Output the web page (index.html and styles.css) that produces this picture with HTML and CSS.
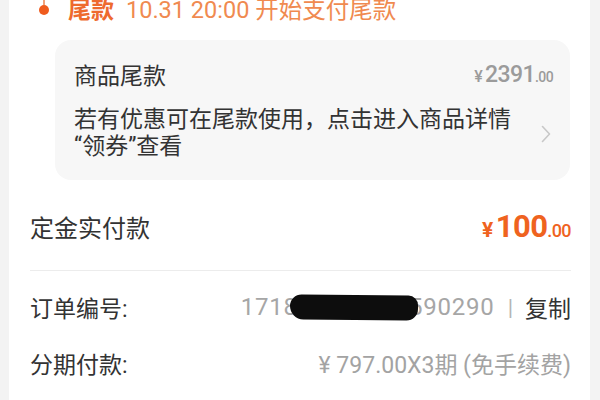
FILE: index.html
```html
<!DOCTYPE html>
<html lang="zh">
<head>
<meta charset="utf-8">
<link rel="stylesheet" href="styles.css">
</head>
<body>
<div class="card">
  <div class="stage">
    <div class="marker"><span class="stem"></span><span class="dot"></span></div>
    <span class="stage-name">尾款</span>
    <span class="stage-time">10.31 20:00 开始支付尾款</span>
  </div>
  <div class="balance">
    <div class="balance-row">
      <span class="label">商品尾款</span>
      <span class="price-gray"><span class="yen">¥</span>2391<span class="dec">.00</span></span>
    </div>
    <div class="coupon">
      <p class="coupon-text">若有优惠可在尾款使用，点击进入商品详情<br>“领券”查看</p>
      <svg class="chev" width="10" height="18" viewBox="0 0 10 18"><path d="M1.5 1.5 L8.5 9 L1.5 16.5" fill="none" stroke="#c8c8c8" stroke-width="1.6" stroke-linecap="round" stroke-linejoin="round"/></svg>
    </div>
  </div>
  <div class="paid">
    <span class="paid-label">定金实付款</span>
    <span class="price-orange"><span class="yen">¥</span>100<span class="dec">.00</span></span>
  </div>
  <div class="divider"></div>
  <div class="info">
    <span class="info-label">订单编号:</span>
    <span class="info-value"><span class="num order">1718<span class="redact"></span>590290</span><span class="sep">|</span><span class="copy">复制</span></span>
  </div>
  <div class="info">
    <span class="info-label">分期付款:</span>
    <span class="info-value"><span class="num">¥ 797.00X3期 (免手续费)</span></span>
  </div>
</div>
</body>
</html>
```
FILE: styles.css
```css
html, body {
  margin: 0;
  padding: 0;
}
body {
  width: 600px;
  height: 400px;
  overflow: hidden;
  background: #f3f3f3;
  font-family: Roboto, "Noto Sans CJK SC", sans-serif;
  color: #333;
}
.card {
  margin-left: 9px;
  width: 581px;
  height: 400px;
  background: #fff;
  overflow: hidden;
}
.stage {
  display: flex;
  align-items: center;
  height: 24px;
  margin-top: -4px;
  padding-left: 30px;
}
.marker {
  display: flex;
  flex-direction: column;
  align-items: center;
  width: 10px;
  margin-right: 19px;
}
.stem {
  width: 1.5px;
  height: 8px;
  background: #f2a27a;
}
.dot {
  width: 10px;
  height: 10px;
  border-radius: 50%;
  background: #ef5b1d;
  margin-bottom: 4px;
}
.stage-name {
  font-size: 23px;
  font-weight: 700;
  color: #ee6a2e;
  margin-right: 12px;
}
.stage-time {
  font-size: 23.5px;
  color: #f08a50;
}
.balance {
  margin: 20px 0 0 46px;
  width: 515px;
  height: 140px;
  box-sizing: border-box;
  background: #f7f7f7;
  border-radius: 16px;
  padding: 0 17px 0 19px;
}
.balance-row {
  display: flex;
  justify-content: space-between;
  align-items: center;
  height: 32px;
  padding-top: 18px;
}
.label {
  font-size: 23px;
  color: #333;
}
.price-gray {
  font-size: 23px;
  font-weight: 500;
  color: #9b9b9b;
  letter-spacing: -0.6px;
}
.price-gray .yen {
  font-size: 16px;
  margin-right: 3px;
}
.price-gray .dec {
  font-size: 14px;
}
.coupon {
  display: flex;
  align-items: center;
  justify-content: space-between;
  margin-top: 16px;
}
.coupon-text {
  margin: 0;
  font-size: 23px;
  line-height: 27px;
  color: #333;
}
.chev {
  margin-right: 2px;
  margin-top: 2px;
}
.paid {
  display: flex;
  justify-content: space-between;
  align-items: center;
  height: 40px;
  margin-top: 26px;
  padding: 0 19px 0 21px;
}
.paid-label {
  font-size: 24px;
  color: #333;
}
.price-orange {
  color: #ef631f;
  font-weight: 700;
  font-size: 31px;
  letter-spacing: -0.6px;
}
.price-orange .yen {
  font-size: 21px;
  margin-right: 3px;
}
.price-orange .dec {
  font-size: 18px;
  font-weight: 500;
}
.divider {
  height: 1px;
  background: #ececec;
  margin: 24px 19px 0 21px;
}
.info {
  display: flex;
  justify-content: space-between;
  align-items: center;
  height: 30px;
  padding: 0 19px 0 21px;
  margin-top: 21px;
}
.info + .info {
  margin-top: 26px;
}
.info-label {
  font-size: 23px;
  color: #333;
}
.info-value {
  display: flex;
  align-items: center;
  font-size: 23px;
}
.num {
  color: #a3a3a3;
  display: flex;
  align-items: center;
}
.order {
  font-size: 24px;
  letter-spacing: 0.8px;
  color: #a6a6a6;
}
.redact {
  position: relative;
  z-index: 1;
  display: inline-block;
  width: 128px;
  height: 25px;
  background: #0d0d0d;
  border-radius: 12px 10px 12px 14px;
  margin: 0 -9px 0 -8px;
  transform: rotate(0.6deg);
}
.sep {
  color: #b5b5b5;
  margin: 0 12px 0 13px;
  font-size: 22px;
}
.copy {
  color: #333;
}
```
